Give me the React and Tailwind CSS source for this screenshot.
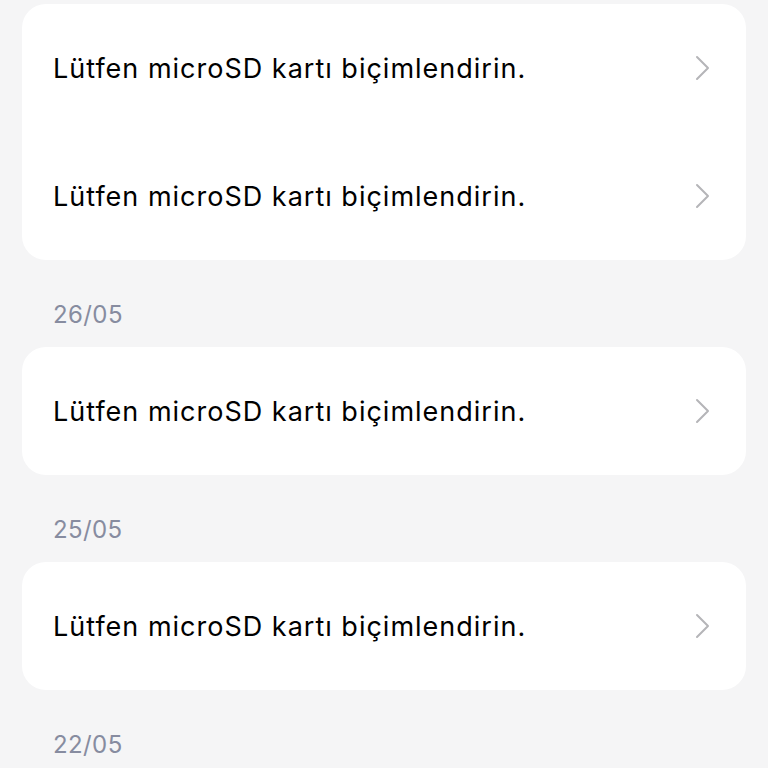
import React from 'react';

const MSG = 'Lütfen microSD kartı biçimlendirin.';

const groups = [
  { date: null, items: [MSG, MSG] },
  { date: '26/05', items: [MSG] },
  { date: '25/05', items: [MSG] },
  { date: '22/05', items: [] },
];

const Chevron = () => (
  <svg width="16" height="26" viewBox="0 0 16 26" fill="none" className="shrink-0">
    <path d="M2 2 L13 13 L2 24" stroke="#b5b5b8" strokeWidth="2" strokeLinecap="round" strokeLinejoin="round" />
  </svg>
);

const Row = ({ text }) => (
  <div className="flex h-[128px] items-center justify-between pl-[31px] pr-[35px]">
    <span className="text-[27px] leading-none tracking-[1px] text-black">{text}</span>
    <Chevron />
  </div>
);

export default function App() {
  return (
    <div
      className="h-[768px] w-[768px] overflow-hidden bg-[#f5f5f6] px-[22px] pt-[4px]"
      style={{ fontFamily: 'Inter, "Liberation Sans", sans-serif' }}
    >
      {groups.map((g, i) => (
        <div key={i}>
          {g.date && (
            <div className="pl-[31px] pt-[42px] pb-[19px] text-[24px] leading-[26px] tracking-[0.4px] text-[#878ca0]">
              {g.date}
            </div>
          )}
          {g.items.length > 0 && (
            <div className="rounded-[24px] bg-white">
              {g.items.map((t, j) => (
                <Row key={j} text={t} />
              ))}
            </div>
          )}
        </div>
      ))}
    </div>
  );
}
